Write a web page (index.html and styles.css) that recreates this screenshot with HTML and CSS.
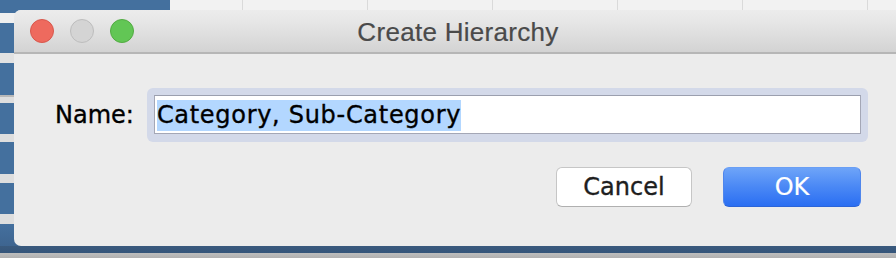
FILE: index.html
```html
<!DOCTYPE html>
<html lang="en">
<head>
<meta charset="utf-8">
<title>Create Hierarchy</title>
<link rel="stylesheet" href="styles.css">
</head>
<body>
<div class="desktop">
  <div class="top-strip">
    <div class="top-blue"></div>
    <div class="top-grid"></div>
  </div>
  <div class="middle">
    <div class="dialog">
      <div class="titlebar">
        <div class="lights">
          <span class="light red"></span>
          <span class="light gray"></span>
          <span class="light green"></span>
        </div>
        <div class="title">Create Hierarchy</div>
        <div class="spacer"></div>
      </div>
      <div class="content">
        <div class="name-row">
          <label class="label">Name:</label>
          <div class="ring">
            <div class="field"><span class="sel">Category, Sub-Category</span></div>
          </div>
        </div>
        <div class="buttons">
          <button class="btn cancel">Cancel</button>
          <button class="btn ok">OK</button>
        </div>
      </div>
    </div>
  </div>
  <div class="bottom-strip"></div>
</div>
</body>
</html>
```
FILE: styles.css
```css
html, body {
  margin: 0;
  padding: 0;
}
body {
  width: 896px;
  height: 258px;
  overflow: hidden;
  background: #44709e;
}
.desktop {
  display: flex;
  flex-direction: column;
  width: 896px;
  height: 258px;
}
.top-strip {
  display: flex;
  height: 10px;
  flex: none;
}
.top-blue {
  width: 170px;
  background: #44709e;
}
.top-grid {
  flex: 1;
  background-color: #f2f2f2;
  background-image: repeating-linear-gradient(to right,
    transparent 0, transparent 72px, #dadada 72px, #dadada 73px, transparent 73px, transparent 125px);
}
.middle {
  height: 236px;
  flex: none;
  display: flex;
  background: linear-gradient(to bottom,
    #44709e 0, #44709e 3px,
    #efefef 3px, #efefef 13px,
    #44709e 13px, #44709e 43px,
    #e2e2e2 43px, #e2e2e2 53px,
    #44709e 53px, #44709e 85px,
    #b8b8b8 85px, #b8b8b8 87px,
    #dedede 87px, #dedede 93px,
    #44709e 93px, #44709e 124px,
    #dedede 124px, #dedede 132px,
    #44709e 132px, #44709e 164px,
    #dedede 164px, #dedede 173px,
    #44709e 173px, #44709e 204px,
    #dedede 204px, #dedede 214px,
    #44709e 214px, #3e6590 236px);
}
.dialog {
  margin-left: 14px;
  width: 888px;
  flex: none;
  display: flex;
  flex-direction: column;
  background: #ececec;
  border-radius: 7px;
  overflow: hidden;
}
.titlebar {
  height: 42px;
  flex: none;
  display: grid;
  grid-template-columns: 1fr auto 1fr;
  align-items: center;
  background: linear-gradient(to bottom, #ececec 0, #e6e6e6 30%, #d3d3d3 100%);
  border-top: 1px solid #f4f4f4;
  border-bottom: 2px solid #b6b6b6;
  box-sizing: content-box;
  margin-top: -1px;
}
.lights {
  display: flex;
  gap: 16px;
  padding-left: 16px;
  align-items: center;
}
.light {
  width: 24px;
  height: 24px;
  border-radius: 50%;
  box-sizing: border-box;
  display: block;
}
.red {
  background: #ee6a5e;
  border: 1px solid #d8574c;
}
.gray {
  background: #d4d4d4;
  border: 1px solid #bdbdbd;
}
.green {
  background: #62c655;
  border: 1px solid #52ab42;
}
.title {
  font-family: "Liberation Sans", Arial, sans-serif;
  font-size: 26px;
  letter-spacing: 0.3px;
  color: #4a4a4a;
  line-height: 30px;
  padding-top: 1px;
  -webkit-text-stroke: 0.2px #4a4a4a;
}
.content {
  flex: 1;
  padding: 34px 34px 0 41px;
  font-family: "DejaVu Sans", Verdana, sans-serif;
  font-size: 24px;
}
.name-row {
  display: flex;
  align-items: center;
  gap: 13px;
}
.label {
  color: #000;
  line-height: 28px;
  -webkit-text-stroke: 0.35px #000;
}
.ring {
  flex: 1;
  height: 54px;
  box-sizing: border-box;
  padding: 7px 7px 8px 7px;
  background: #d3d9e9;
  border-radius: 6px;
}
.field {
  height: 39px;
  box-sizing: border-box;
  background: #fff;
  border: 1px solid #a4a7b6;
  border-top-color: #9b9fae;
  padding: 4px 0 0 2px;
  display: flex;
  align-items: flex-start;
}
.sel {
  background: #b3d7ff;
  color: #000;
  line-height: 31px;
  height: 31px;
  letter-spacing: 0.7px;
  white-space: nowrap;
  -webkit-text-stroke: 0.35px #000;
}
.buttons {
  display: flex;
  justify-content: flex-end;
  gap: 31px;
  margin-top: 25px;
  padding-right: 7px;
}
.btn {
  font-family: "DejaVu Sans", Verdana, sans-serif;
  font-size: 24px;
  height: 40px;
  border-radius: 6px;
  box-sizing: border-box;
  padding: 0;
  line-height: 36px;
  cursor: default;
}
.cancel {
  width: 136px;
  background: #fff;
  color: #1e1e1e;
  border: 1px solid #c6c6c6;
  border-bottom-color: #b0b0b0;
  -webkit-text-stroke: 0.35px #1e1e1e;
}
.ok {
  width: 138px;
  color: #fff;
  background: linear-gradient(to bottom, #6ea4f8 0, #4a88f5 50%, #2a6ef2 100%);
  border: 1px solid #4f86ec;
  border-top-color: #6a9ff5;
  border-bottom-color: #2b64d8;
  -webkit-text-stroke: 0.2px #fff;
}
.bottom-strip {
  flex: 1;
  background: linear-gradient(to bottom, #3a5a7e 0, #35557a 7px, #bdbdbd 7px, #b1b1b1 12px);
}
```
